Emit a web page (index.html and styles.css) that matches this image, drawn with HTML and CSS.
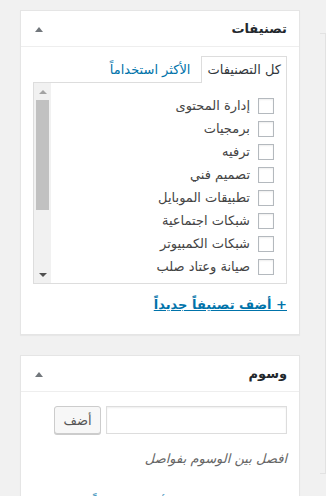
FILE: index.html
```html
<!DOCTYPE html>
<html lang="ar" dir="rtl">
<head>
  <meta charset="UTF-8" />
  <meta name="viewport" content="width=device-width, initial-scale=1.0" />
  <title>تصنيفات ووسوم</title>
  <link rel="stylesheet" href="styles.css">
</head>
<body>
  <div class="page">
    <div class="side-strip"></div>
    <div class="column">
      <section class="postbox">
        <header class="postbox-head">
          <h2>تصنيفات</h2>
          <span class="toggle"><span class="arrow"></span></span>
        </header>
        <div class="inside">
          <ul class="tabs">
            <li class="tab active">كل التصنيفات</li>
            <li class="tab"><a href="#">الأكثر استخداماً</a></li>
          </ul>
          <div class="panel">
            <ul class="checklist">
              <li><span class="check"></span>إدارة المحتوى</li>
              <li><span class="check"></span>برمجيات</li>
              <li><span class="check"></span>ترفيه</li>
              <li><span class="check"></span>تصميم فني</li>
              <li><span class="check"></span>تطبيقات الموبايل</li>
              <li><span class="check"></span>شبكات اجتماعية</li>
              <li><span class="check"></span>شبكات الكمبيوتر</li>
              <li><span class="check"></span>صيانة وعتاد صلب</li>
            </ul>
            <div class="scrollbar">
              <span class="sb-btn up"></span>
              <div class="sb-track"><div class="sb-thumb"></div></div>
              <span class="sb-btn down"></span>
            </div>
          </div>
          <a class="add-link" href="#">+ أضف تصنيفاً جديداً</a>
        </div>
      </section>

      <section class="postbox">
        <header class="postbox-head">
          <h2>وسوم</h2>
          <span class="toggle"><span class="arrow"></span></span>
        </header>
        <div class="inside tags">
          <div class="tag-form">
            <input type="text" class="tag-input">
            <button class="btn">أضف</button>
          </div>
          <p class="hint">افصل بين الوسوم بفواصل</p>
          <a class="more-link" href="#">اختر من بين الوسوم الأكثر استخداماً</a>
        </div>
      </section>
    </div>
  </div>
</body>
</html>
```

FILE: styles.css
```css
body {
  margin: 0;
  padding: 0;
  background-color: #f1f1f1;
  font-family: "DejaVu Sans", sans-serif;
  font-size: 13px;
  color: #444;
  direction: rtl;
  overflow: hidden;
}
.page {
  display: flex;
  align-items: flex-start;
}
.side-strip {
  width: 6px;
  height: 441px;
  margin-top: 33px;
  box-sizing: border-box;
  border-right: 1px solid #e2e2e2;
  border-top: 1px solid #e2e2e2;
  border-bottom: 1px solid #e2e2e2;
}
.column {
  width: 280px;
  margin-top: 10px;
  margin-right: 20px;
}
.postbox {
  background-color: #fff;
  border: 1px solid #e5e5e5;
  box-shadow: 0 1px 1px rgba(0, 0, 0, 0.04);
  margin-bottom: 20px;
}
.postbox-head {
  height: 36px;
  box-sizing: border-box;
  border-bottom: 1px solid #eee;
  display: flex;
  align-items: center;
  justify-content: space-between;
  padding-right: 12px;
}
.postbox-head h2 {
  margin: 0;
  font-size: 13px;
  font-weight: bold;
  color: #23282d;
}
.toggle {
  width: 36px;
  height: 36px;
  display: flex;
  align-items: center;
  justify-content: center;
}
.arrow {
  width: 0;
  height: 0;
  border-left: 4px solid transparent;
  border-right: 4px solid transparent;
  border-bottom: 5px solid #72777c;
  margin-top: 2px;
}
.inside {
  padding: 9px 12px 20px;
}
.tabs {
  list-style: none;
  margin: 0;
  padding: 0;
  display: flex;
  gap: 5px;
}
.tab {
  padding: 3px 5px 4px;
  line-height: 19px;
  border: 1px solid transparent;
  border-bottom: none;
  margin-bottom: -1px;
  position: relative;
}
.tab.active {
  background-color: #fff;
  border-color: #ddd;
  color: #32373c;
}
.tab a {
  color: #0073aa;
  text-decoration: none;
}
.panel {
  height: 202px;
  box-sizing: border-box;
  border: 1px solid #ddd;
  background-color: #fff;
  display: flex;
}
.checklist {
  flex: 1;
  list-style: none;
  margin: 0;
  padding: 11px 12px 0 0;
  overflow: hidden;
}
.checklist li {
  height: 23px;
  display: flex;
  align-items: center;
  color: #444;
  white-space: nowrap;
}
.check {
  width: 16px;
  height: 16px;
  box-sizing: border-box;
  border: 1px solid #b4b9be;
  background-color: #fff;
  box-shadow: inset 0 1px 2px rgba(0, 0, 0, 0.07);
  margin-left: 8px;
  flex-shrink: 0;
}
.scrollbar {
  width: 17px;
  background-color: #f1f1f1;
  display: flex;
  flex-direction: column;
}
.sb-btn {
  height: 17px;
  display: flex;
  align-items: center;
  justify-content: center;
}
.sb-btn::before {
  content: "";
  width: 0;
  height: 0;
  border-left: 4px solid transparent;
  border-right: 4px solid transparent;
}
.sb-btn.up::before {
  border-bottom: 4px solid #a3a3a3;
}
.sb-btn.down::before {
  border-top: 4px solid #505050;
}
.sb-track {
  flex: 1;
  padding: 0 2px;
}
.sb-thumb {
  height: 110px;
  background-color: #c1c1c1;
}
.add-link {
  display: inline-block;
  margin-top: 11px;
  line-height: 19px;
  font-weight: bold;
  color: #0073aa;
  text-decoration: underline;
}
.inside.tags {
  padding-top: 14px;
}
.tag-form {
  display: flex;
  gap: 5px;
}
.tag-input {
  width: 181px;
  height: 28px;
  box-sizing: border-box;
  margin: 0;
  border: 1px solid #ddd;
  box-shadow: inset 0 1px 2px rgba(0, 0, 0, 0.07);
  background-color: #fff;
}
.btn {
  width: 47px;
  height: 28px;
  margin: 0;
  border: 1px solid #ccc;
  border-radius: 3px;
  background-color: #f7f7f7;
  box-shadow: 0 1px 0 #ccc;
  color: #555;
  font-family: "DejaVu Sans", sans-serif;
  font-size: 13px;
}
.hint {
  margin: 15px 0 0;
  line-height: 19px;
  font-style: italic;
  color: #666;
}
.more-link {
  display: block;
  margin-top: 25px;
  line-height: 19px;
  color: #0073aa;
  text-decoration: none;
}
```
